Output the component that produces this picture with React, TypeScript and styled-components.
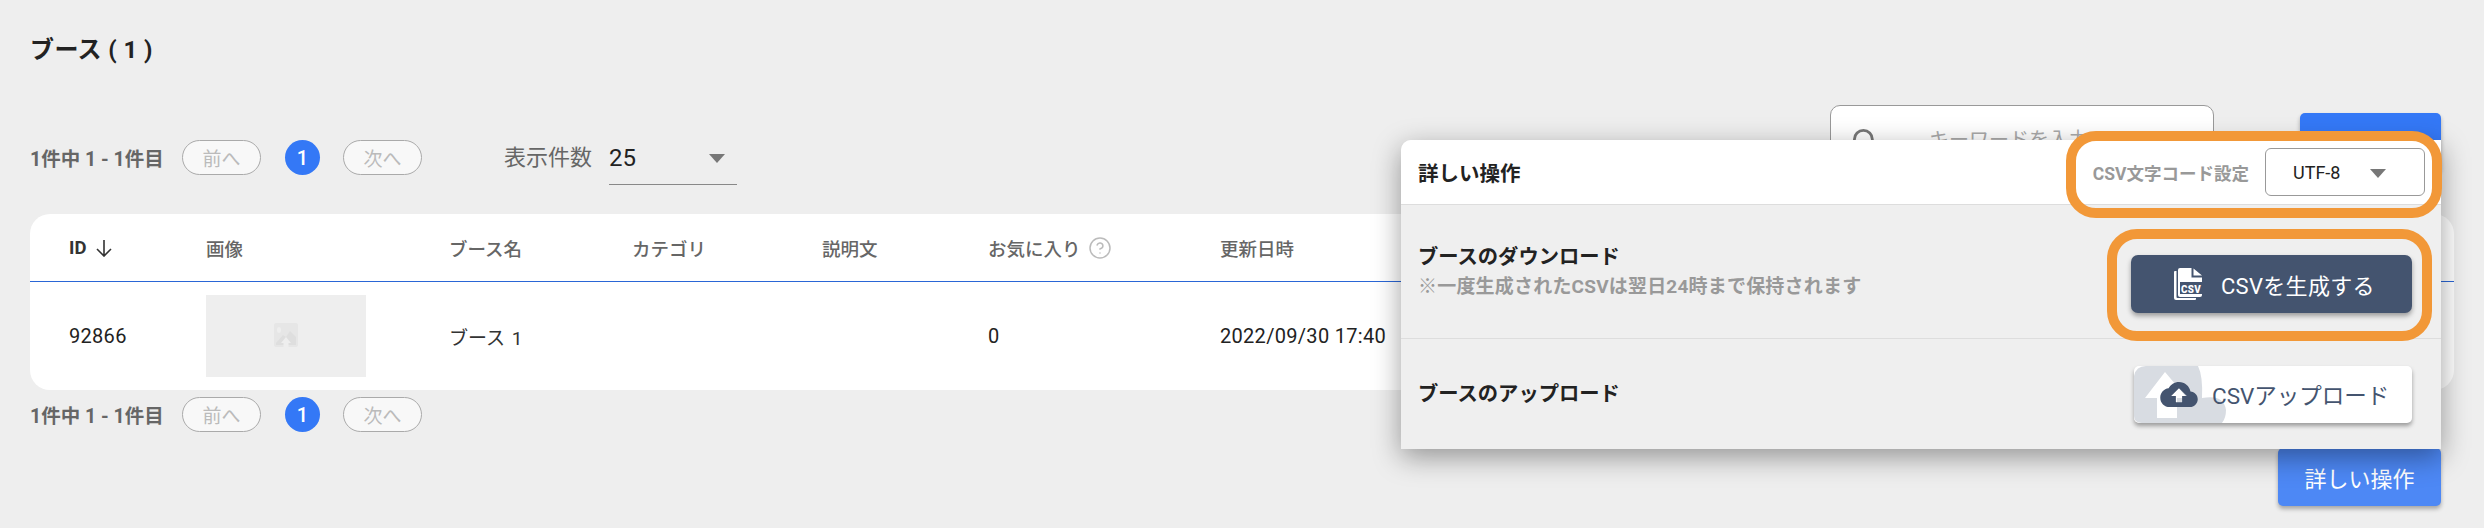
import styled, { createGlobalStyle } from "styled-components";
import { CircleHelp, Search } from "lucide-react";

const GlobalStyle = createGlobalStyle`
  html, body {
    margin: 0;
    padding: 0;
    background: #eeeeee;
    font-family: Roboto, "Noto Sans CJK JP", sans-serif;
  }
  * {
    box-sizing: border-box;
  }
`;

const Page = styled.div`
  position: relative;
  width: 2484px;
  height: 528px;
  padding: 37px 30px 0;
  overflow: hidden;
  background: #eeeeee;
`;

const Title = styled.h1`
  margin: 0 0 42px 0;
  font-size: 24px;
  line-height: 26px;
  font-weight: 700;
  letter-spacing: 0.4px;
  color: #222222;
  white-space: pre;
`;

const Toolbar = styled.div`
  display: flex;
  height: 109px;
  padding-right: 13px;
  align-items: flex-start;
`;

const ToolbarLeft = styled.div`
  display: flex;
  align-items: flex-start;
  padding-top: 35px;
  margin-right: auto;
`;

const Pagination = styled.div`
  display: flex;
  align-items: center;
  height: 35px;
`;

const PageInfo = styled.span`
  width: 152px;
  font-size: 19.5px;
  font-weight: 700;
  color: #666666;
  white-space: pre;
`;

const PageButton = styled.button`
  width: 79px;
  height: 35px;
  padding: 0;
  border: 1px solid #aaaaaa;
  border-radius: 18px;
  background: #f8f8f8;
  color: #bbbbbb;
  font-family: inherit;
  font-size: 19px;
`;

const PageNumber = styled.span`
  display: flex;
  width: 35px;
  height: 35px;
  margin: 0 23px 0 24px;
  align-items: center;
  justify-content: center;
  border-radius: 50%;
  background: #3478f6;
  color: #ffffff;
  font-size: 20px;
  font-weight: 500;
`;

const PerPage = styled.div`
  display: flex;
  margin-left: 82px;
`;

const PerPageLabel = styled.span`
  margin-right: 17px;
  font-size: 22px;
  line-height: 35px;
  color: #666666;
`;

const PerPageSelect = styled.div`
  display: flex;
  width: 128px;
  height: 45px;
  padding-right: 12px;
  justify-content: space-between;
  border-bottom: 1px solid #888888;
  font-size: 24px;
  line-height: 36px;
  color: #222222;
`;

const Caret = styled.span`
  width: 0;
  height: 0;
  margin-top: 14px;
  border-left: 8px solid transparent;
  border-right: 8px solid transparent;
  border-top: 9px solid #777777;
`;

const SearchBox = styled.label`
  display: flex;
  width: 384px;
  height: 70px;
  padding-left: 20px;
  align-items: center;
  border: 1px solid #999999;
  border-radius: 10px;
  background: #ffffff;
  color: #777777;
`;

const SearchInput = styled.input`
  flex: 1;
  min-width: 0;
  margin-left: 49px;
  border: none;
  outline: none;
  background: transparent;
  font-family: inherit;
  font-size: 20px;

  &::placeholder {
    color: #aaaaaa;
  }
`;

const PrimaryButton = styled.button`
  height: 58px;
  padding: 0;
  border: none;
  border-radius: 5px;
  background: #3478f6;
  color: #ffffff;
  font-family: inherit;
  font-size: 22px;
  box-shadow: 0 3px 4px rgba(0, 0, 0, 0.3);
`;

const CreateButton = styled(PrimaryButton)`
  width: 141px;
  margin: 8px 0 0 86px;
`;

const Table = styled.div`
  height: 176px;
  border-radius: 20px;
  background: #ffffff;
`;

const Row = styled.div`
  display: grid;
  grid-template-columns: 137px 243px 183px 190px 166px 232px 1fr;
  padding-left: 39px;
  align-items: center;
`;

const HeadRow = styled(Row)`
  height: 68px;
  border-bottom: 1.5px solid #2a66d6;
  font-size: 18.5px;
  font-weight: 500;
  color: #666666;
`;

const BodyRow = styled(Row)`
  height: 108px;
  font-size: 20px;
  letter-spacing: 0.3px;
  color: #222222;
`;

const BoothName = styled.span`
  font-size: 19px;
  letter-spacing: 0;
  word-spacing: 2px;
  color: #333333;
`;

const SortHead = styled.span`
  display: flex;
  align-items: center;
  gap: 9px;
  font-weight: 700;
  color: #333333;
`;

const HelpHead = styled.span`
  display: flex;
  align-items: center;
  gap: 7px;
  color: #666666;

  svg {
    color: #bbbbbb;
  }
`;

const Thumbnail = styled.div`
  display: flex;
  width: 160px;
  height: 82px;
  align-items: center;
  justify-content: center;
  background: #eeeeee;
`;

const BottomPagination = styled(Pagination)`
  margin-top: 7px;
`;

const Footer = styled.div`
  display: flex;
  margin-top: 16px;
  padding-right: 13px;
  justify-content: flex-end;
`;

const DetailButton = styled(PrimaryButton)`
  width: 163px;
  background: #4d88f5;
`;

const Panel = styled.section`
  position: absolute;
  left: 1401px;
  top: 140px;
  width: 1040px;
  height: 309px;
  border-radius: 10px 0 0 0;
  background: #efefef;
  box-shadow: 0 8px 28px rgba(0, 0, 0, 0.38);
  overflow: hidden;
`;

const PanelHeader = styled.header`
  display: flex;
  height: 65px;
  padding: 0 16px 0 17px;
  align-items: center;
  border-bottom: 1px solid #dddddd;
  background: #ffffff;
`;

const PanelTitle = styled.h2`
  margin: 0 auto 0 0;
  font-size: 20.5px;
  font-weight: 700;
  color: #222222;
`;

const EncodingLabel = styled.span`
  margin-right: 16px;
  font-size: 17.5px;
  font-weight: 700;
  color: #999999;
`;

const EncodingSelect = styled.div`
  display: flex;
  width: 160px;
  height: 48px;
  padding: 0 38px 0 27px;
  align-items: center;
  justify-content: space-between;
  border: 1px solid #999999;
  border-radius: 6px;
  background: #ffffff;
  font-size: 18px;
  color: #222222;
`;

const EncodingCaret = styled(Caret)`
  margin-top: 2px;
`;

const PanelSection = styled.div`
  display: flex;
  padding: 0 29px 0 17px;
  align-items: center;
  justify-content: space-between;
`;

const DownloadSection = styled(PanelSection)`
  height: 134px;
  border-bottom: 1px solid #dddddd;
`;

const UploadSection = styled(PanelSection)`
  height: 110px;
`;

const SectionText = styled.div`
  display: flex;
  flex-direction: column;
  gap: 6px;
`;

const SectionTitle = styled.h3`
  margin: 0;
  font-size: 20.3px;
  line-height: 24px;
  font-weight: 700;
  color: #222222;
`;

const SectionNote = styled.p`
  margin: 0;
  font-size: 19px;
  line-height: 24px;
  font-weight: 700;
  letter-spacing: 0.2px;
  color: #999999;
`;

const GenerateButton = styled.button`
  display: flex;
  width: 281px;
  height: 58px;
  margin-top: 25px;
  padding: 0 0 0 43px;
  align-items: center;
  gap: 19px;
  border: none;
  border-radius: 7px;
  background: #44546f;
  color: #ffffff;
  font-family: inherit;
  font-size: 22px;
  letter-spacing: 0.3px;
  box-shadow: 0 3px 5px rgba(0, 0, 0, 0.35);
`;

const UploadButton = styled.button`
  position: relative;
  display: flex;
  width: 278px;
  height: 57px;
  padding: 0 0 0 26px;
  align-items: center;
  gap: 14px;
  border: none;
  border-radius: 5px;
  background: #ffffff;
  color: #44546f;
  font-family: inherit;
  font-size: 22.5px;
  box-shadow: 0 3px 4px rgba(0, 0, 0, 0.35);
  overflow: hidden;
`;

const UploadBackdrop = styled.svg`
  position: absolute;
  left: 0;
  top: 0;
`;

const UploadIcon = styled.svg`
  position: relative;
`;

const UploadLabel = styled.span`
  position: relative;
`;

const Highlight = styled.div`
  position: absolute;
  border: 10px solid #f29838;
  border-radius: 30px;
  pointer-events: none;
`;

const EncodingHighlight = styled(Highlight)`
  left: 2066px;
  top: 131px;
  width: 376px;
  height: 87px;
`;

const GenerateHighlight = styled(Highlight)`
  left: 2107px;
  top: 229px;
  width: 325px;
  height: 112px;
`;

const ImagePlaceholderIcon = () => (
  <svg width="24" height="26" viewBox="0 0 24 26">
    <rect x="0" y="0" width="24" height="24" rx="2" fill="#e6e6e6" />
    <rect x="3" y="4" width="4" height="6" rx="2" fill="#eeeeee" />
    <path d="M2 20 L9 12 L12 14 L16 8 L22 14 V22 H2 Z" fill="#dedede" />
    <path d="M12 14 L17 20 H14.5 V26 H9.5 V20 H7 Z" fill="#eeeeee" />
  </svg>
);

const CsvIcon = () => (
  <svg width="28" height="32" viewBox="0 0 28 32">
    <path
      d="M1 3 H2.5 V29 Q2.5 30 3.5 30 H22 V31 Q22 32 21 32 H2 Q0 32 0 30 V4 Q0 3 1 3 Z"
      fill="#ffffff"
    />
    <path
      d="M6 0 H17.5 V9.5 H28 V27 Q28 29 26 29 H6 Q4 29 4 27 V2 Q4 0 6 0 Z"
      fill="#ffffff"
    />
    <path d="M19.5 0.5 L28 7.5 H19.5 Z" fill="#ffffff" />
    <rect x="6" y="14" width="22" height="12" fill="#44546f" />
    <text
      x="17"
      y="24.5"
      textAnchor="middle"
      fontSize="10.5"
      fontWeight="900"
      fill="#ffffff"
      textLength="20"
      lengthAdjust="spacingAndGlyphs"
    >
      CSV
    </text>
  </svg>
);

const PagerRow = () => (
  <>
    <PageInfo>1件中 1 - 1件目</PageInfo>
    <PageButton>前へ</PageButton>
    <PageNumber>1</PageNumber>
    <PageButton>次へ</PageButton>
  </>
);

const App = () => {
  return (
    <Page>
      <GlobalStyle />
      <Title>ブース ( 1 )</Title>
      <Toolbar>
        <ToolbarLeft>
          <Pagination>
            <PagerRow />
          </Pagination>
          <PerPage>
            <PerPageLabel>表示件数</PerPageLabel>
            <PerPageSelect>
              25
              <Caret />
            </PerPageSelect>
          </PerPage>
        </ToolbarLeft>
        <SearchBox>
          <Search size={27} strokeWidth={2.5} />
          <SearchInput placeholder="キーワードを入力" />
        </SearchBox>
        <CreateButton>新規作成</CreateButton>
      </Toolbar>
      <Table>
        <HeadRow>
          <SortHead>
            ID
            <svg width="18" height="18" viewBox="0 0 18 18" fill="none" stroke="#333333" strokeWidth="1.6">
              <path d="M9 1 V17 M2 10 L9 17 L16 10" />
            </svg>
          </SortHead>
          <span>画像</span>
          <span>ブース名</span>
          <span>カテゴリ</span>
          <span>説明文</span>
          <HelpHead>
            お気に入り
            <CircleHelp size={24} strokeWidth={1.5} />
          </HelpHead>
          <span>更新日時</span>
        </HeadRow>
        <BodyRow>
          <span>92866</span>
          <Thumbnail>
            <ImagePlaceholderIcon />
          </Thumbnail>
          <BoothName>ブース 1</BoothName>
          <span />
          <span />
          <span>0</span>
          <span>2022/09/30 17:40</span>
        </BodyRow>
      </Table>
      <BottomPagination>
        <PagerRow />
      </BottomPagination>
      <Footer>
        <DetailButton>詳しい操作</DetailButton>
      </Footer>
      <Panel>
        <PanelHeader>
          <PanelTitle>詳しい操作</PanelTitle>
          <EncodingLabel>CSV文字コード設定</EncodingLabel>
          <EncodingSelect>
            UTF-8
            <EncodingCaret />
          </EncodingSelect>
        </PanelHeader>
        <DownloadSection>
          <SectionText>
            <SectionTitle>ブースのダウンロード</SectionTitle>
            <SectionNote>※一度生成されたCSVは翌日24時まで保持されます</SectionNote>
          </SectionText>
          <GenerateButton>
            <CsvIcon />
            CSVを生成する
          </GenerateButton>
        </DownloadSection>
        <UploadSection>
          <SectionTitle>ブースのアップロード</SectionTitle>
          <UploadButton>
            <UploadBackdrop width="92" height="57" viewBox="0 0 92 57">
              <path
                d="M0 10 Q2 0 12 0 H64 Q69 10 68 32 Q90 28 92 44 Q92 52 88 57 H8 Q0 57 0 50 Z"
                fill="#d8dce2"
              />
              <path d="M31 6 L53 32 H43 V52 H23 V32 H11 Z" fill="#ffffff" />
            </UploadBackdrop>
            <UploadIcon width="38" height="25" viewBox="0 4 24 16">
              <path
                d="M19.35 10.04C18.67 6.59 15.64 4 12 4 9.11 4 6.6 5.64 5.35 8.04 2.34 8.36 0 10.91 0 14c0 3.31 2.69 6 6 6h13c2.76 0 5-2.24 5-5 0-2.64-2.05-4.78-4.65-4.96zM14 13v4h-4v-4H7l5-5 5 5h-3z"
                fill="#44546f"
              />
            </UploadIcon>
            <UploadLabel>CSVアップロード</UploadLabel>
          </UploadButton>
        </UploadSection>
      </Panel>
      <EncodingHighlight />
      <GenerateHighlight />
    </Page>
  );
};

export default App;
